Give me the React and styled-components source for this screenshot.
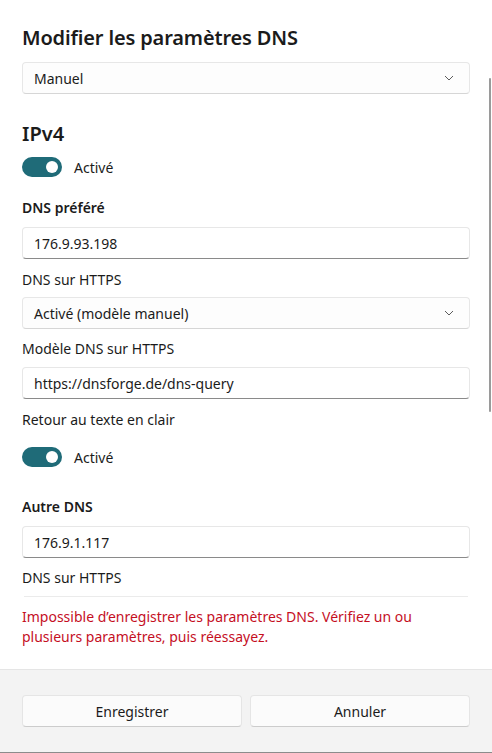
import React from "react";
import styled, { createGlobalStyle } from "styled-components";

const Global = createGlobalStyle`
  html, body { margin: 0; padding: 0; background: #ffffff; }
  * { box-sizing: border-box; }
  body { font-family: "Noto Sans", "Open Sans", sans-serif; color: #1b1b1b; }
`;

const Dialog = styled.div`
  width: 492px;
  height: 753px;
  display: flex;
  flex-direction: column;
  background: #ffffff;
  border-bottom: 1px solid #8c8c8c;
  position: relative;
`;

const Content = styled.div`
  flex: 1;
  overflow: hidden;
  display: flex;
  flex-direction: column;
  padding: 24px 22px 0 22px;
  position: relative;
`;

const ScrollThumb = styled.div`
  position: absolute;
  left: 489px;
  top: 78px;
  width: 2px;
  height: 334px;
  border-radius: 1px;
  background: #9a9a9a;
`;

const Title = styled.h1`
  margin: 0;
  font-size: 20px;
  line-height: 28px;
  font-weight: 600;
  letter-spacing: -0.15px;
`;

const SectionTitle = styled.h2`
  margin: ${(p) => p.$mt}px 0 0 0;
  font-size: 20px;
  line-height: 28px;
  font-weight: 600;
`;

const Label = styled.div`
  margin-top: ${(p) => p.$mt}px;
  font-size: 14px;
  line-height: 20px;
  font-weight: ${(p) => (p.$bold ? 600 : 400)};
`;

const Select = styled.div`
  margin-top: ${(p) => p.$mt}px;
  height: 32px;
  border: 1px solid #e7e7e7;
  border-bottom-color: #d6d6d6;
  border-radius: 4px;
  background: #fdfdfd;
  display: flex;
  align-items: center;
  justify-content: space-between;
  padding: 0 15px 0 11px;
  font-size: 14px;
`;

const Input = styled.div`
  margin-top: ${(p) => p.$mt}px;
  height: 32px;
  border: 1px solid #e7e7e7;
  border-bottom: 1px solid #8a8a8a;
  border-radius: 4px;
  background: #ffffff;
  display: flex;
  align-items: center;
  padding: 0 11px;
  font-size: 14px;
`;

const ToggleRow = styled.div`
  margin-top: ${(p) => p.$mt}px;
  display: flex;
  align-items: center;
  gap: 12px;
  height: 20px;
  font-size: 14px;
`;

const Track = styled.div`
  width: 40px;
  height: 20px;
  border-radius: 10px;
  background: #1f6b78;
  display: flex;
  align-items: center;
  justify-content: flex-end;
  padding-right: 4px;
`;

const Knob = styled.div`
  width: 12px;
  height: 12px;
  border-radius: 50%;
  background: #ffffff;
`;

const Divider = styled.div`
  margin: 8px 2px 0 2px;
  height: 1px;
  background: #ebebeb;
`;

const ErrorText = styled.div`
  margin-top: 10px;
  font-size: 14px;
  line-height: 20px;
  color: #c50f1f;
  max-width: 410px;
`;

const Footer = styled.div`
  height: 83px;
  background: #f3f3f3;
  border-top: 1px solid #e5e5e5;
  display: grid;
  grid-template-columns: 1fr 1fr;
  gap: 8px;
  padding: 25px 22px 0 22px;
  align-items: start;
`;

const Button = styled.div`
  height: 32px;
  border: 1px solid #e5e5e5;
  border-bottom-color: #cccccc;
  border-radius: 4px;
  background: #fbfbfb;
  display: flex;
  align-items: center;
  justify-content: center;
  font-size: 14px;
`;

const Chevron = () => (
  <svg width="10" height="6" viewBox="0 0 10 6">
    <polyline points="1,1 5,5 9,1" fill="none" stroke="#5c5c5c" strokeWidth="1" />
  </svg>
);

const Toggle = ({ mt, label }) => (
  <ToggleRow $mt={mt}>
    <Track>
      <Knob />
    </Track>
    {label}
  </ToggleRow>
);

export default function App() {
  return (
    <>
      <Global />
      <Dialog>
        <Content>
          <Title>Modifier les paramètres DNS</Title>
          <Select $mt={10}>
            Manuel
            <Chevron />
          </Select>
          <SectionTitle $mt={26}>IPv4</SectionTitle>
          <Toggle mt={9} label="Activé" />
          <Label $mt={21} $bold>DNS préféré</Label>
          <Input $mt={9}>176.9.93.198</Input>
          <Label $mt={11}>DNS sur HTTPS</Label>
          <Select $mt={7}>
            Activé (modèle manuel)
            <Chevron />
          </Select>
          <Label $mt={10}>Modèle DNS sur HTTPS</Label>
          <Input $mt={8}>https://dnsforge.de/dns-query</Input>
          <Label $mt={11}>Retour au texte en clair</Label>
          <Toggle mt={17} label="Activé" />
          <Label $mt={30} $bold>Autre DNS</Label>
          <Input $mt={9}>176.9.1.117</Input>
          <Label $mt={10}>DNS sur HTTPS</Label>
          <Divider />
          <ErrorText>
            Impossible d’enregistrer les paramètres DNS. Vérifiez un ou plusieurs paramètres, puis réessayez.
          </ErrorText>
        </Content>
        <ScrollThumb />
        <Footer>
          <Button>Enregistrer</Button>
          <Button>Annuler</Button>
        </Footer>
      </Dialog>
    </>
  );
}
